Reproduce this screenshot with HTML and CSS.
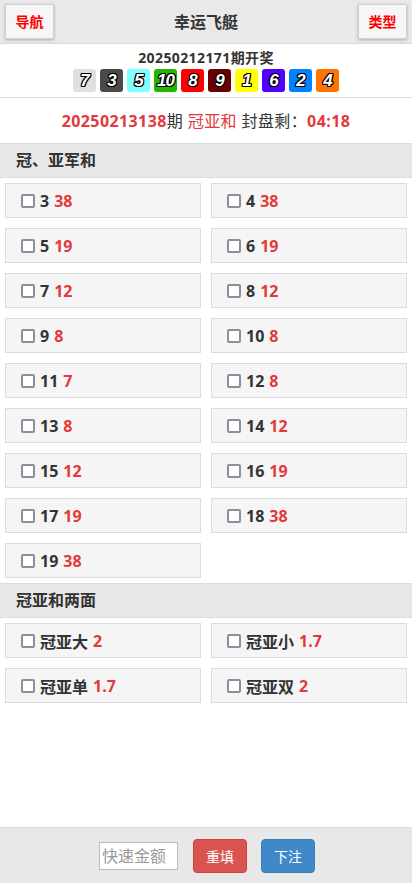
FILE: index.html
```html
<!DOCTYPE html>
<html lang="zh">
<head>
<meta charset="utf-8">
<meta name="viewport" content="width=device-width, initial-scale=1">
<title>幸运飞艇</title>
<link rel="stylesheet" href="styles.css">
</head>
<body>
<div class="page">
  <header class="topbar">
    <button class="top-btn">导航</button>
    <h1 class="title">幸运飞艇</h1>
    <button class="top-btn">类型</button>
  </header>

  <section class="draw">
    <div class="draw-title">20250212171期开奖</div>
    <div class="balls">
      <span class="ball b7">7</span>
      <span class="ball b3">3</span>
      <span class="ball b5">5</span>
      <span class="ball b10">10</span>
      <span class="ball b8">8</span>
      <span class="ball b9">9</span>
      <span class="ball b1">1</span>
      <span class="ball b6">6</span>
      <span class="ball b2">2</span>
      <span class="ball b4">4</span>
    </div>
  </section>

  <div class="period">
    <span class="red bold">20250213138</span>期 <span class="red">冠亚和</span> 封盘剩：<span class="red bold">04:18</span>
  </div>

  <div class="sec-head">冠、亚军和</div>
  <div class="grid">
    <div class="cell"><span class="cb"></span><span class="lbl">3</span><span class="odds">38</span></div>
    <div class="cell"><span class="cb"></span><span class="lbl">4</span><span class="odds">38</span></div>
    <div class="cell"><span class="cb"></span><span class="lbl">5</span><span class="odds">19</span></div>
    <div class="cell"><span class="cb"></span><span class="lbl">6</span><span class="odds">19</span></div>
    <div class="cell"><span class="cb"></span><span class="lbl">7</span><span class="odds">12</span></div>
    <div class="cell"><span class="cb"></span><span class="lbl">8</span><span class="odds">12</span></div>
    <div class="cell"><span class="cb"></span><span class="lbl">9</span><span class="odds">8</span></div>
    <div class="cell"><span class="cb"></span><span class="lbl">10</span><span class="odds">8</span></div>
    <div class="cell"><span class="cb"></span><span class="lbl">11</span><span class="odds">7</span></div>
    <div class="cell"><span class="cb"></span><span class="lbl">12</span><span class="odds">8</span></div>
    <div class="cell"><span class="cb"></span><span class="lbl">13</span><span class="odds">8</span></div>
    <div class="cell"><span class="cb"></span><span class="lbl">14</span><span class="odds">12</span></div>
    <div class="cell"><span class="cb"></span><span class="lbl">15</span><span class="odds">12</span></div>
    <div class="cell"><span class="cb"></span><span class="lbl">16</span><span class="odds">19</span></div>
    <div class="cell"><span class="cb"></span><span class="lbl">17</span><span class="odds">19</span></div>
    <div class="cell"><span class="cb"></span><span class="lbl">18</span><span class="odds">38</span></div>
    <div class="cell"><span class="cb"></span><span class="lbl">19</span><span class="odds">38</span></div>
  </div>

  <div class="sec-head">冠亚和两面</div>
  <div class="grid">
    <div class="cell"><span class="cb"></span><span class="lbl">冠亚大</span><span class="odds">2</span></div>
    <div class="cell"><span class="cb"></span><span class="lbl">冠亚小</span><span class="odds">1.7</span></div>
    <div class="cell"><span class="cb"></span><span class="lbl">冠亚单</span><span class="odds">1.7</span></div>
    <div class="cell"><span class="cb"></span><span class="lbl">冠亚双</span><span class="odds">2</span></div>
  </div>

  <footer class="bottombar">
    <input class="amount" type="text" placeholder="快速金额">
    <button class="btn btn-red">重填</button>
    <button class="btn btn-blue">下注</button>
  </footer>
</div>
</body>
</html>
```

FILE: styles.css
```css
* { box-sizing: border-box; }

html, body {
  margin: 0;
  padding: 0;
  background: #fff;
}

body {
  font-family: "Open Sans", "Noto Sans CJK SC", sans-serif;
  color: #333;
}

.page {
  display: flex;
  flex-direction: column;
  min-height: 100vh;
}

.topbar {
  display: flex;
  align-items: center;
  justify-content: space-between;
  height: 44px;
  padding: 0 5px 1px;
  background: #e9e9e9;
  border-bottom: 1px solid #d8d8d8;
}

.top-btn {
  width: 49px;
  height: 35px;
  padding: 0;
  border: 1px solid #d0d0d0;
  background: #f6f6f6;
  box-shadow: 0 1px 3px rgba(0,0,0,0.25);
  color: #ff0000;
  font-family: "Open Sans", "Noto Sans CJK SC", sans-serif;
  font-size: 14px;
  font-weight: bold;
  line-height: 33px;
}

.title {
  margin: 0;
  font-size: 16px;
  font-weight: bold;
  color: #333;
}

.draw {
  padding: 4px 0 5px;
  border-bottom: 1px solid #dcdcdc;
  text-align: center;
}

.draw-title {
  font-size: 14px;
  font-weight: bold;
  line-height: 20px;
  letter-spacing: 0.4px;
  margin-bottom: 1px;
}

.balls {
  display: flex;
  justify-content: center;
  gap: 4px;
}

.ball {
  width: 23px;
  height: 23px;
  border-radius: 3px;
  color: #fff;
  font-family: "Liberation Sans", Arial, sans-serif;
  font-style: italic;
  font-weight: bold;
  font-size: 17px;
  line-height: 23px;
  text-align: center;
  letter-spacing: -1px;
  text-shadow: 1px 1px 0 #000, -1px -1px 0 #000, 1px -1px 0 #000, -1px 1px 0 #000,
               0 1px 0 #000, 0 -1px 0 #000, 1px 0 0 #000, -1px 0 0 #000;
}

.b7 { background: #e0e0e0; }
.b3 { background: #4a4a4a; }
.b5 { background: #80ffff; }
.b10 { background: #22b800; }
.b8 { background: #ff0000; }
.b9 { background: #6b0000; }
.b1 { background: #ffff00; }
.b6 { background: #5200ff; }
.b2 { background: #0083ff; }
.b4 { background: #ff7300; }

.period {
  height: 45px;
  line-height: 46px;
  text-align: center;
  font-size: 16px;
  letter-spacing: 0.4px;
  color: #333;
}

.red { color: #e4393c; }
.bold { font-weight: bold; }

.sec-head {
  height: 35px;
  line-height: 33px;
  padding-left: 16px;
  background: #e8e8e8;
  border-top: 1px solid #dcdcdc;
  border-bottom: 1px solid #dcdcdc;
  font-size: 16px;
  font-weight: bold;
  color: #333;
}

.grid {
  display: grid;
  grid-template-columns: 1fr 1fr;
  gap: 10px;
  padding: 5px;
}

.cell {
  display: flex;
  align-items: center;
  height: 35px;
  padding-left: 15px;
  background: #f5f5f5;
  border: 1px solid #dcdcdc;
  font-size: 16px;
  font-weight: bold;
}

.cb {
  width: 14px;
  height: 14px;
  border: 2px solid #8f8c9b;
  border-radius: 2px;
  background: #fff;
  margin-right: 5px;
}

.lbl { color: #333; margin-right: 5px; }
.odds { color: #e4393c; }

.bottombar {
  margin-top: auto;
  display: flex;
  align-items: center;
  justify-content: center;
  height: 56px;
  background: #e8e8e8;
  border-top: 1px solid #dcdcdc;
  padding-left: 2px;
}

.amount {
  width: 79px;
  height: 28px;
  border: 1px solid #bcbcbc;
  background: #fff;
  padding: 0 2px;
  font-family: "Open Sans", "Noto Sans CJK SC", sans-serif;
  font-size: 16px;
  margin-right: 15px;
}

.amount::placeholder { color: #999; }

.btn {
  width: 54px;
  height: 34px;
  border-radius: 4px;
  color: #fff;
  font-family: "Open Sans", "Noto Sans CJK SC", sans-serif;
  font-size: 14px;
  padding: 0;
}

.btn-red {
  background: #d9534f;
  border: 1px solid #d43f3a;
  margin-right: 14px;
}

.btn-blue {
  background: #3f89c9;
  border: 1px solid #3a7fbd;
}
```
